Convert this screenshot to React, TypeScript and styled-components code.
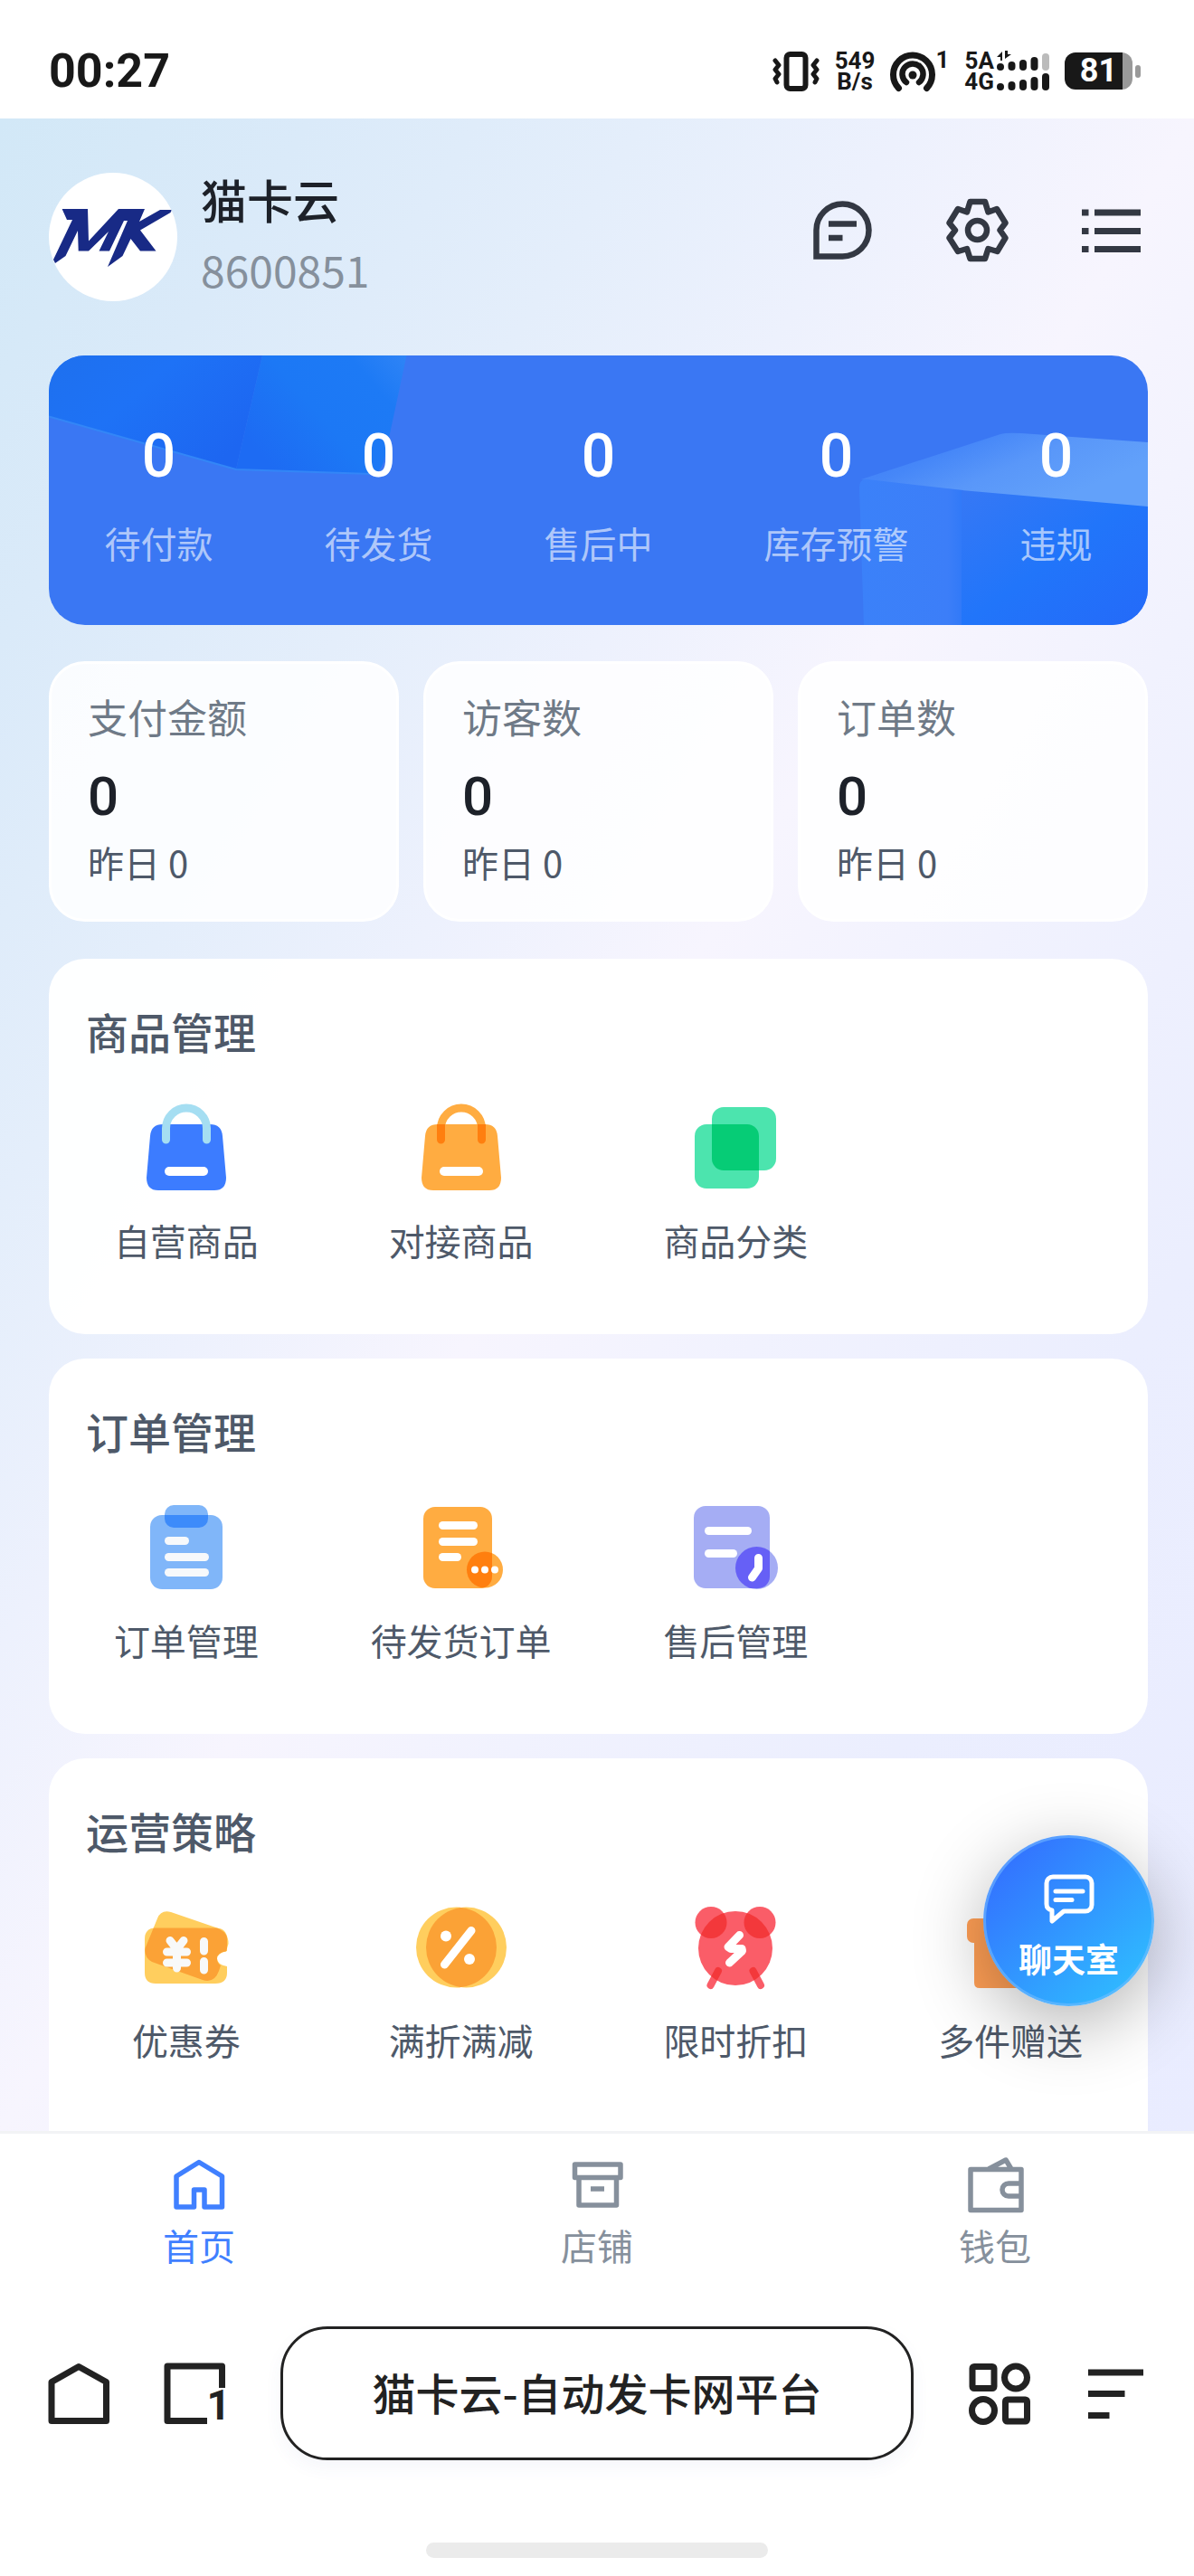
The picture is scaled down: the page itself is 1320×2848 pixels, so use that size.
import React from 'react';
import styled, { createGlobalStyle } from 'styled-components';

const cjk = '"Noto Sans CJK SC", "Noto Sans", sans-serif';
const latin = 'Roboto, "Noto Sans CJK SC", sans-serif';

const GlobalStyle = createGlobalStyle`
  *, *::before, *::after { box-sizing: border-box; }
  body { margin: 0; background: #fff; font-family: ${cjk}; color: #1d2129; }
  button { font: inherit; color: inherit; border: 0; padding: 0; background: none; cursor: pointer; }
  a { color: inherit; text-decoration: none; }
  h1, h2, p, dl, dt, dd, ul { margin: 0; padding: 0; }
  ul { list-style: none; }
  svg { display: block; flex: none; }
`;

const Shell = styled.div`
  display: flex;
  flex-direction: column;
  height: 100vh;
`;

/* ---------- status bar ---------- */

const StatusBar = styled.header`
  display: flex;
  align-items: center;
  justify-content: space-between;
  padding: 59px 59px 33px 54px;
  font-family: ${latin};
  font-weight: 700;
  color: #181818;
  background: #fff;
`;

const Clock = styled.time`
  font-size: 52px;
  line-height: 39px;
`;

const StatusIcons = styled.div`
  display: flex;
  align-items: center;
  gap: 17px;
  height: 39px;
`;

const TwoLines = styled.span`
  display: flex;
  flex-direction: column;
  align-items: center;
  font-size: 26px;
  line-height: 23px;
`;

const Cluster = styled.span<{ $gap: number }>`
  display: flex;
  align-items: flex-start;
  gap: ${(p) => p.$gap}px;
`;

const Sup = styled.sup`
  font-size: 26px;
  line-height: 20px;
`;

const Battery = styled.span`
  display: flex;
  align-items: center;
  gap: 3px;
  &::after {
    content: '';
    width: 6px;
    height: 14px;
    border-radius: 3px;
    background: #999;
  }
`;

const BatteryBody = styled.span`
  width: 75px;
  border-radius: 12px;
  background: linear-gradient(90deg, #181818 85%, #999 85%);
  color: #fff;
  font-size: 36px;
  line-height: 41px;
  text-align: center;
`;

/* ---------- scrolling area ---------- */

const Stage = styled.div`
  position: relative;
  flex: 1;
  min-height: 0;
  overflow: hidden;
  background: linear-gradient(
    to bottom right,
    #d2e8f7 0%,
    #daeaf9 13%,
    #e4eefb 27%,
    #edf1fd 38%,
    #f7f5fe 50%,
    #f1f2fe 62%,
    #ebeefe 78%,
    #e9ecff 100%
  );
`;

const Scroller = styled.main`
  display: flex;
  flex-direction: column;
  height: 100%;
  padding: 0 51px 0 54px;
  overflow-y: auto;
  scrollbar-width: none;
`;

const Profile = styled.section`
  display: flex;
  gap: 26px;
  padding: 60px 3px 60px 0;
`;

const Avatar = styled.div`
  width: 142px;
  height: 142px;
  border-radius: 50%;
  background: #fff;
  overflow: hidden;
`;

const Identity = styled.div`
  display: flex;
  flex: 1;
  flex-direction: column;
  justify-content: space-between;
`;

const ShopName = styled.h1`
  font-size: 51px;
  font-weight: 500;
  line-height: 58px;
`;

const ShopId = styled.p`
  font-size: 48px;
  line-height: 72px;
  color: #86909c;
`;

const Actions = styled.div`
  display: flex;
  align-items: center;
  gap: 72px;
  padding-bottom: 16px;
  color: #333843;
`;

const Banner = styled.section`
  position: relative;
  flex: none;
  border-radius: 40px;
  overflow: hidden;
  background: #3a77f3;
`;

const BannerArt = styled.svg<{ $side: 'left' | 'right' }>`
  position: absolute;
  top: 0;
  ${(p) => p.$side}: 0;
`;

const Counters = styled.dl`
  position: relative;
  display: flex;
  justify-content: space-around;
  padding: 71px 0 67px;
`;

const Counter = styled.div`
  display: flex;
  flex-direction: column-reverse;
  align-items: center;
  gap: 30px;
  dt { font-size: 40px; line-height: 48px; color: rgba(255, 255, 255, 0.6); }
  dd { font-family: ${latin}; font-size: 66px; font-weight: 500; line-height: 82px; color: #fff; }
`;

const Metrics = styled.section`
  display: grid;
  grid-template-columns: repeat(3, 1fr);
  gap: 27px;
  margin: 40px 0 41px;
`;

const Metric = styled.article`
  padding: 28px 40px 36px;
  border: 3px solid #fff;
  border-radius: 40px;
  background: rgba(255, 255, 255, 0.86);
`;

const MetricLabel = styled.h2`
  font-size: 44px;
  font-weight: 400;
  line-height: 60px;
  color: #6f7a87;
`;

const MetricValue = styled.p`
  margin: 23px 0 9px;
  font-family: ${latin};
  font-size: 60px;
  font-weight: 500;
  line-height: 72px;
`;

const MetricNote = styled.p`
  font-size: 40px;
  line-height: 54px;
  color: #4e5969;
`;

const Panel = styled.section<{ $last?: boolean }>`
  flex: ${(p) => (p.$last ? '1 0 auto' : 'none')};
  margin-bottom: ${(p) => (p.$last ? 0 : '27px')};
  padding: 50px 0 76px;
  border-radius: ${(p) => (p.$last ? '40px 40px 0 0' : '40px')};
  background: rgba(255, 255, 255, 0.96);
  color: #4e5969;
`;

const PanelTitle = styled.h2`
  padding-left: 41px;
  font-size: 47px;
  font-weight: 500;
  line-height: 60px;
`;

const Tiles = styled.ul`
  display: grid;
  grid-template-columns: repeat(4, 1fr);
  margin-top: 49px;
`;

const Tile = styled.a`
  display: flex;
  flex-direction: column;
  align-items: center;
  gap: 24px;
  font-size: 40px;
  line-height: 56px;
  white-space: nowrap;
`;

const ChatButton = styled.button`
  position: absolute;
  right: 44px;
  bottom: 138px;
  display: flex;
  flex-direction: column;
  align-items: center;
  gap: 15px;
  width: 189px;
  height: 189px;
  padding-top: 40px;
  border: 3px solid rgba(120, 190, 255, 0.55);
  border-radius: 50%;
  background: linear-gradient(135deg, #3370ff 10%, #2fc0ff 95%) border-box;
  box-shadow: 0 20px 80px rgba(0, 0, 0, 0.3);
  color: #fff;
  font-size: 37px;
  font-weight: 700;
  line-height: 44px;
`;

/* ---------- bottom bars ---------- */

const TabBar = styled.nav`
  display: grid;
  grid-template-columns: repeat(3, 1fr);
  padding: 24px 0 66px;
  border-top: 3px solid #f2f3f5;
  background: #fff;
`;

const Tab = styled.a<{ $active?: boolean }>`
  display: flex;
  flex-direction: column;
  align-items: center;
  gap: 11px;
  font-size: 40px;
  line-height: 48px;
  color: ${(p) => (p.$active ? '#4080ff' : '#86909c')};
`;

const BrowserBar = styled.footer`
  display: flex;
  align-items: center;
  gap: 60px;
  padding: 0 52px;
  color: #222;
`;

const TabsButton = styled.button`
  position: relative;
`;

const TabCount = styled.span`
  position: absolute;
  right: -5px;
  bottom: -5px;
  font-family: ${latin};
  font-size: 46px;
  font-weight: 700;
  line-height: 54px;
`;

const Address = styled.button`
  flex: 1;
  height: 148px;
  padding-bottom: 4px;
  border: 3px solid #222;
  border-radius: 52px;
  box-shadow: 0 8px 20px rgba(60, 70, 160, 0.05);
  font-size: 48px;
  font-weight: 500;
  white-space: nowrap;
`;

const HomeIndicator = styled.div`
  width: 378px;
  height: 17px;
  margin: 91px auto 20px;
  border-radius: 9px;
  background: #ebebeb;
`;

/* ---------- icons ---------- */

type StrokeProps = { size: number; width: number; children: React.ReactNode; join?: 'round' | 'miter'; cap?: 'round' | 'butt' };

const Line = ({ size, width, children, join = 'miter', cap = 'butt' }: StrokeProps) => (
  <svg width={size} height={size} viewBox={`0 0 ${size} ${size}`} fill="none" stroke="currentColor" strokeWidth={width} strokeLinejoin={join} strokeLinecap={cap} aria-hidden="true">
    {children}
  </svg>
);

const Tinted = ({ children }: { children: React.ReactNode }) => (
  <svg width="100" height="100" viewBox="0 0 100 100" aria-hidden="true">{children}</svg>
);

const bagBody = 'M24 24H76Q89 24 90 37L94 83Q94 97 81 97H19Q6 97 6 83L10 37Q11 24 24 24Z';
const handle = 'M27.5 41V28.500a22.500 22.500 0 0 1 45 0V41';

const BlueBag = () => (
  <Tinted>
    <path d={bagBody} fill="#3c7cff" />
    <path d={handle} fill="none" stroke="#a5def2" strokeWidth="9" strokeLinecap="round" />
    <rect x="26" y="71" width="48" height="10" rx="5" fill="#fff" />
  </Tinted>
);

const OrangeBag = () => (
  <Tinted>
    <path d={handle} fill="none" stroke="#ffac41" strokeWidth="9" strokeLinecap="round" />
    <path d={bagBody} fill="#ffac41" />
    <path d="M23 24h9v17a4.500 4.500 0 0 1-9 0zM68 24h9v17a4.500 4.500 0 0 1-9 0z" fill="#ff7f0f" />
    <rect x="26" y="71" width="48" height="10" rx="5" fill="#fff" />
  </Tinted>
);

const Squares = () => (
  <Tinted>
    <rect x="24" y="5" width="71" height="70" rx="13" fill="#4ce4ae" />
    <rect x="5" y="24" width="71" height="71" rx="13" fill="#4ce4ae" />
    <path d="M24 24H63a13 13 0 0 1 13 13V75H37a13 13 0 0 1-13-13Z" fill="#06cc76" />
  </Tinted>
);

const Clipboard = () => (
  <Tinted>
    <rect x="10" y="14" width="80" height="82" rx="13" fill="#80b6f9" />
    <rect x="26" y="3" width="48" height="25" rx="10" fill="#80b6f9" />
    <path d="M26 14H74V18a10 10 0 0 1-10 10H36a10 10 0 0 1-10-10Z" fill="#3d8bfa" />
    <g fill="#f7f9fb">
      <rect x="26" y="38" width="27" height="9" rx="4.5" />
      <rect x="26" y="56" width="49" height="9" rx="4.5" />
      <rect x="26" y="73" width="49" height="9" rx="4.5" />
    </g>
  </Tinted>
);

const PendingDoc = () => (
  <Tinted>
    <clipPath id="pending"><rect x="8" y="5" width="76" height="90" rx="13" /></clipPath>
    <rect x="8" y="5" width="76" height="90" rx="13" fill="#ffac41" />
    <circle cx="76" cy="74.500" r="20" fill="#ffac41" />
    <circle cx="76" cy="74.500" r="20" fill="#ff7f0f" clipPath="url(#pending)" />
    <g fill="#fff">
      <rect x="25" y="21" width="43" height="9" rx="4.5" />
      <rect x="25" y="39" width="43" height="9" rx="4.5" />
      <rect x="25" y="56" width="25" height="9" rx="4.5" />
      <circle cx="65" cy="74.500" r="4" /><circle cx="76" cy="74.500" r="4" /><circle cx="87" cy="74.500" r="4" />
    </g>
  </Tinted>
);

const AfterSale = () => (
  <Tinted>
    <clipPath id="aftersale"><rect x="4" y="4" width="84" height="91" rx="13" /></clipPath>
    <rect x="4" y="4" width="84" height="91" rx="13" fill="#a5adf4" />
    <circle cx="73.500" cy="72.500" r="23.500" fill="#a5adf4" />
    <circle cx="73.500" cy="72.500" r="23.500" fill="#6660f6" clipPath="url(#aftersale)" />
    <rect x="16" y="27" width="52" height="9" rx="4.5" fill="#fff" />
    <rect x="16" y="52" width="36" height="9" rx="4.5" fill="#fff" />
    <path d="M75.500 61.500V73L68.500 83" fill="none" stroke="#fff" strokeWidth="9" strokeLinecap="round" strokeLinejoin="round" />
  </Tinted>
);

const ticketFlat = 'M16 28.500H82Q95 28.500 95 41V54Q84 56 84 62.500Q84 69 95 71V78Q95 90 82 90H16Q4 90 4 78V41Q4 28.500 16 28.500Z';
const ticketTilt = 'M33 11L84 28.500Q97 34 96.500 46L94 54.500Q84 56 84 62.500Q84 67 88 70L86 76Q81 90 68 86L12 66Q3 61 4.500 51L18 18Q22 8 33 11Z';

const Coupon = () => (
  <Tinted>
    <clipPath id="ticket"><path d={ticketFlat} /></clipPath>
    <path d={ticketTilt} fill="#ffce5e" />
    <path d={ticketFlat} fill="#ffce5e" />
    <path d={ticketTilt} fill="#fba236" clipPath="url(#ticket)" />
    <path d="M32 42.500L39.500 52L47 42.500M39.500 52V73M28.500 55H50.500M28.500 67H50.500M69.500 43.500V54M69.500 65.500V75" fill="none" stroke="#f8f9f9" strokeWidth="9" strokeLinecap="round" strokeLinejoin="round" />
  </Tinted>
);

const Percent = () => (
  <Tinted>
    <clipPath id="coin"><circle cx="44.500" cy="50" r="44.500" /></clipPath>
    <circle cx="44.500" cy="50" r="44.500" fill="#ffce5e" />
    <circle cx="55.500" cy="50" r="44.500" fill="#ffce5e" />
    <circle cx="55.500" cy="50" r="44.500" fill="#fba236" clipPath="url(#coin)" />
    <path d="M61 31.500L31.500 69" stroke="#fff" strokeWidth="9" strokeLinecap="round" />
    <circle cx="33" cy="37.500" r="6" fill="#fff" /><circle cx="59" cy="63" r="6" fill="#fff" />
  </Tinted>
);

const Alarm = () => (
  <Tinted>
    <clipPath id="face"><circle cx="50" cy="51" r="41" /></clipPath>
    <g fill="#fa5d68"><circle cx="50" cy="51" r="41" /><circle cx="23" cy="22.500" r="17.500" /><circle cx="77" cy="22.500" r="17.500" /></g>
    <path d="M31 76L22.500 92M69.500 76L78 92" stroke="#fa5d68" strokeWidth="8" strokeLinecap="round" />
    <g clipPath="url(#face)" fill="#f3383b">
      <circle cx="23" cy="22.500" r="17.500" /><circle cx="77" cy="22.500" r="17.500" />
      <path d="M31 76L22.500 92M69.500 76L78 92" stroke="#f3383b" strokeWidth="8" strokeLinecap="round" />
    </g>
    <path d="M54.500 36.500L42 49.500L45 51.500H57L57.500 54L43.500 67" fill="none" stroke="#fff" strokeWidth="9" strokeLinecap="round" strokeLinejoin="round" />
  </Tinted>
);

const Gift = () => (
  <Tinted>
    <rect x="2" y="18" width="96" height="27" rx="7" fill="#ff9f55" />
    <path d="M10 40H90V89Q90 95 84 95H16Q10 95 10 89Z" fill="#ff9f55" />
  </Tinted>
);

const Logo = () => (
  <svg width="142" height="142" viewBox="0 0 142 142" role="img" aria-label="MK">
    <path fill="#182a86" d="M14.600 40H43L44 75.500L77 40H106L100 54L123 41H136L134.500 44L101 63.500L118.500 86.500H101L90.500 73L81.500 92L65 104L87 53H83L67 86.500H55.500L66 65L44 86.500H32.700L32 64L18.500 92L7 100L5 96L26 52H20Z" />
  </svg>
);

/* ---------- data ---------- */

const counters = ['待付款', '待发货', '售后中', '库存预警', '违规'];
const metrics = ['支付金额', '访客数', '订单数'];
const panels = [
  { title: '商品管理', tiles: [['自营商品', BlueBag], ['对接商品', OrangeBag], ['商品分类', Squares]] },
  { title: '订单管理', tiles: [['订单管理', Clipboard], ['待发货订单', PendingDoc], ['售后管理', AfterSale]] },
  { title: '运营策略', tiles: [['优惠券', Coupon], ['满折满减', Percent], ['限时折扣', Alarm], ['多件赠送', Gift]] },
] as { title: string; tiles: [string, React.FC][] }[];

const bars = [8, 10, 12, 15, 19];

export default function App() {
  return (
    <Shell>
      <GlobalStyle />
      <StatusBar>
        <Clock>00:27</Clock>
        <StatusIcons>
          <svg width="52" height="46" viewBox="0 0 52 46" fill="none" stroke="currentColor" strokeLinejoin="round" strokeLinecap="round" aria-hidden="true">
            <rect x="15.500" y="4" width="21" height="38" rx="4" strokeWidth="6" />
            <path d="M3 11l4 5-4 5 4 5-4 5 2 4M49 11l-4 5 4 5-4 5 4 5-2 4" strokeWidth="5" />
          </svg>
          <TwoLines><span>549</span><span>B/s</span></TwoLines>
          <Cluster $gap={0}>
            <svg width="50" height="46" viewBox="0 0 50 46" fill="none" stroke="currentColor" strokeLinecap="round" aria-hidden="true">
              <path d="M9.500 41.500a21.500 21.500 0 1 1 31 0" strokeWidth="7" />
              <path d="M18 35a11.500 11.500 0 1 1 14 0" strokeWidth="6.500" />
              <circle cx="25" cy="27" r="4.500" fill="currentColor" stroke="none" />
            </svg>
            <Sup>1</Sup>
          </Cluster>
          <Cluster $gap={3}>
            <TwoLines><span>5A</span><span>4G</span></TwoLines>
            <svg width="58" height="46" viewBox="0 0 58 46" fill="currentColor" aria-hidden="true">
              {bars.map((h, i) => (
                <g key={h}>
                  <rect x={i * 12.5} y={22 - h} width="8" height={h} rx="4" fill={i === 4 ? '#bbb' : undefined} />
                  <rect x={i * 12.5} y={44 - h} width="8" height={h} rx="4" />
                </g>
              ))}
              <path d="M0 7L6 1V11H4V7ZM9 0V9L16 4H12V0Z" />
            </svg>
          </Cluster>
          <Battery><BatteryBody>81</BatteryBody></Battery>
        </StatusIcons>
      </StatusBar>

      <Stage>
        <Scroller>
          <Profile>
            <Avatar><Logo /></Avatar>
            <Identity>
              <ShopName>猫卡云</ShopName>
              <ShopId>8600851</ShopId>
            </Identity>
            <Actions>
              <button aria-label="消息">
                <Line size={76} width={6.5}><path d="M8.500 67.500V38.500a29 29 0 1 1 29 29ZM22 31.500H53M22 47H37.500" /></Line>
              </button>
              <button aria-label="设置">
                <Line size={76} width={6.5} join="round">
                  <path d="M30.500 7H47L50.500 18.500L60 15L69.500 30.500L63.500 38.500L69.500 47L60.500 62L50.500 59L47 70H30.500L27 59L17 62L7.500 47L14 38.500L7.500 30.500L17 15L27 18.500Z" />
                  <circle cx="38.500" cy="38.500" r="10.500" />
                </Line>
              </button>
              <button aria-label="菜单">
                <Line size={76} width={7}><path d="M6 19H13.500M20 19H71M6 39.500H13.500M20 39.500H71M6 59.500H13.500M20 59.500H71" /></Line>
              </button>
            </Actions>
          </Profile>

          <Banner>
            <BannerArt $side="left" width="400" height="140" viewBox="0 0 400 140" aria-hidden="true">
              <defs>
                <linearGradient id="cubeA" x1="0" y1="0" x2="1" y2="0.6"><stop offset="0" stopColor="#1e70ee" /><stop offset="0.45" stopColor="#1e72f6" /><stop offset="1" stopColor="#1d66f1" /></linearGradient>
                <linearGradient id="cubeB" x1="0" y1="0.6" x2="1" y2="0"><stop offset="0" stopColor="#1d6bf3" /><stop offset="0.4" stopColor="#1c78f5" /><stop offset="0.75" stopColor="#1d7af5" /><stop offset="1" stopColor="#2f84f6" /></linearGradient>
              </defs>
              <path d="M0 0H236L207 126L0 67.500Z" fill="url(#cubeA)" />
              <path d="M236 0H395.500L372 110Q368 131 356 131L207 126Z" fill="url(#cubeB)" />
              <path d="M0 67.500L207 126L356 131" fill="none" stroke="#3386f7" strokeWidth="2" />
            </BannerArt>
            <BannerArt $side="right" width="320" height="298" viewBox="0 0 320 298" aria-hidden="true">
              <defs>
                <linearGradient id="lid" x1="0" y1="0.2" x2="0.8" y2="0.7"><stop offset="0" stopColor="#3d7df7" /><stop offset="0.3" stopColor="#4687f8" /><stop offset="0.6" stopColor="#5997f9" /><stop offset="1" stopColor="#62a1fa" /></linearGradient>
                <linearGradient id="side" x1="0" y1="0" x2="1" y2="0"><stop offset="0" stopColor="#3b81f9" /><stop offset="0.85" stopColor="#3c7ef8" /><stop offset="1" stopColor="#3079f8" /></linearGradient>
                <linearGradient id="front" x1="0" y1="0" x2="1" y2="1"><stop offset="0" stopColor="#3678f5" /><stop offset="0.5" stopColor="#2175fa" /><stop offset="1" stopColor="#246af9" /></linearGradient>
              </defs>
              <path d="M3 137L157 87Q164 85 180 86L320 96V170L110 152Z" fill="url(#lid)" />
              <path d="M1 146Q1 136 10 137L116 149V298H6Z" fill="url(#side)" />
              <path d="M114 149L320 167V298H114Z" fill="url(#front)" />
            </BannerArt>
            <Counters>
              {counters.map((name) => (
                <Counter key={name}><dt>{name}</dt><dd>0</dd></Counter>
              ))}
            </Counters>
          </Banner>

          <Metrics>
            {metrics.map((name) => (
              <Metric key={name}>
                <MetricLabel>{name}</MetricLabel>
                <MetricValue>0</MetricValue>
                <MetricNote>昨日 0</MetricNote>
              </Metric>
            ))}
          </Metrics>

          {panels.map((panel, i) => (
            <Panel key={panel.title} $last={i === panels.length - 1}>
              <PanelTitle>{panel.title}</PanelTitle>
              <Tiles>
                {panel.tiles.map(([name, Icon]) => (
                  <li key={name}><Tile href="#"><Icon />{name}</Tile></li>
                ))}
              </Tiles>
            </Panel>
          ))}
        </Scroller>
        <ChatButton>
          <Line size={56} width={5} join="round" cap="round">
            <path d="M10 3H46a7 7 0 0 1 7 7V34a7 7 0 0 1-7 7H22L9 52V40Q3 39 3 33V10a7 7 0 0 1 7-7ZM13 19H43M13 28.500H31" />
          </Line>
          聊天室
        </ChatButton>
      </Stage>

      <TabBar>
        <Tab href="#" $active>
          <Line size={64} width={5.5} join="round"><path d="M7 23L32 7.500L57.500 23V57H38V38H26.500V57H7Z" /></Line>
          首页
        </Tab>
        <Tab href="#">
          <Line size={64} width={5.5} join="round"><path d="M7.500 10H58V24.500H7.500ZM12 24.500V55H53.500V24.500M25 37H40" /></Line>
          店铺
        </Tab>
        <Tab href="#">
          <Line size={64} width={5.5} join="round"><path d="M5 15.500H61V60.500H5ZM25 15L44 5L50 15M61 31H47a7 7 0 0 0 0 14H61" /></Line>
          钱包
        </Tab>
      </TabBar>

      <BrowserBar>
        <button aria-label="主页">
          <Line size={69} width={7} join="round"><path d="M5 21.500L35 4.500L65.500 21.500V64.500H5Z" /></Line>
        </button>
        <TabsButton aria-label="标签页">
          <Line size={69} width={7} join="round"><path d="M64.500 28V4H4V64.500H48" /></Line>
          <TabCount>1</TabCount>
        </TabsButton>
        <Address>猫卡云-自动发卡网平台</Address>
        <button aria-label="应用">
          <Line size={69} width={7}>
            <rect x="5" y="4.500" width="24" height="24" rx="2" /><circle cx="53" cy="16.500" r="12.500" />
            <circle cx="17" cy="53" r="12.500" /><rect x="41.500" y="41" width="24" height="24" rx="2" />
          </Line>
        </button>
        <button aria-label="更多">
          <Line size={69} width={7}><path d="M4 11H65M4 34.500H44.500M4 58.500H27.500" /></Line>
        </button>
      </BrowserBar>
      <HomeIndicator />
    </Shell>
  );
}
